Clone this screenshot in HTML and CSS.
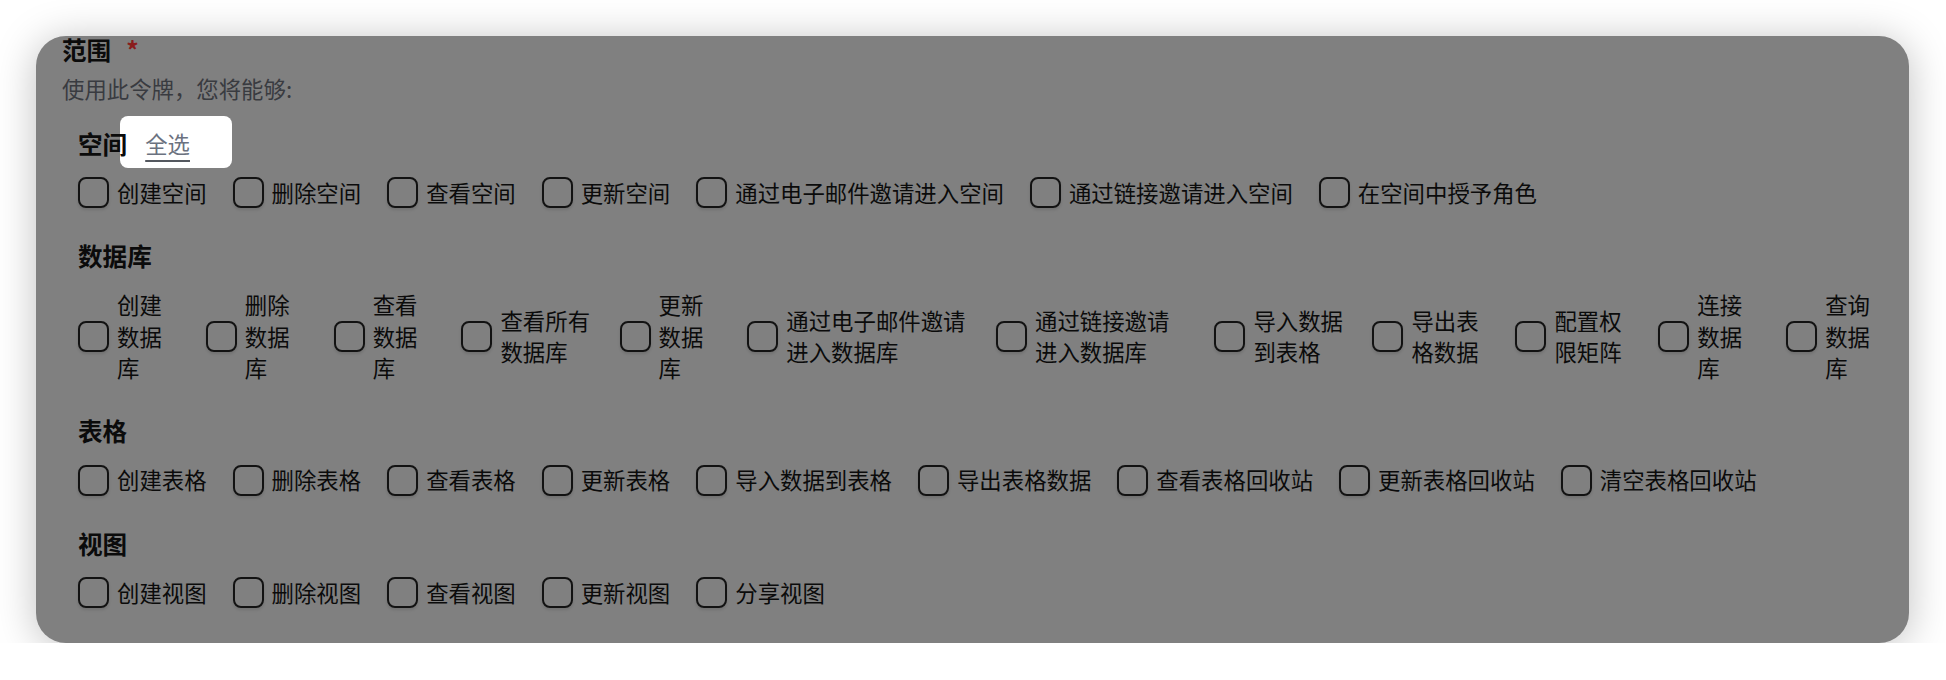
FILE: index.html
```html
<!DOCTYPE html>
<html lang="zh-CN">
<head>
    <meta charset="UTF-8">
    <meta name="viewport" content="width=device-width, initial-scale=1.0">
    <title>范围</title>
    <link rel="stylesheet" href="styles.css">
</head>
<body>
    <div class="page">
        <div class="card">
            <div class="field-title">范围<span class="req">*</span></div>
            <p class="hint">使用此令牌，您将能够:</p>

            <div class="scopes">
                <section class="scope">
                    <div class="scope-head">
                        <h3>空间</h3>
                        <button class="select-all">全选</button>
                    </div>
                    <div class="options">
                        <label class="opt"><input type="checkbox"><span>创建空间</span></label>
                        <label class="opt"><input type="checkbox"><span>删除空间</span></label>
                        <label class="opt"><input type="checkbox"><span>查看空间</span></label>
                        <label class="opt"><input type="checkbox"><span>更新空间</span></label>
                        <label class="opt"><input type="checkbox"><span>通过电子邮件邀请进入空间</span></label>
                        <label class="opt"><input type="checkbox"><span>通过链接邀请进入空间</span></label>
                        <label class="opt"><input type="checkbox"><span>在空间中授予角色</span></label>
                    </div>
                </section>

                <section class="scope">
                    <div class="scope-head">
                        <h3>数据库</h3>
                    </div>
                    <div class="options">
                        <label class="opt"><input type="checkbox"><span>创建数据库</span></label>
                        <label class="opt"><input type="checkbox"><span>删除数据库</span></label>
                        <label class="opt"><input type="checkbox"><span>查看数据库</span></label>
                        <label class="opt"><input type="checkbox"><span>查看所有数据库</span></label>
                        <label class="opt"><input type="checkbox"><span>更新数据库</span></label>
                        <label class="opt"><input type="checkbox"><span>通过电子邮件邀请进入数据库</span></label>
                        <label class="opt"><input type="checkbox"><span>通过链接邀请进入数据库</span></label>
                        <label class="opt"><input type="checkbox"><span>导入数据到表格</span></label>
                        <label class="opt"><input type="checkbox"><span>导出表格数据</span></label>
                        <label class="opt"><input type="checkbox"><span>配置权限矩阵</span></label>
                        <label class="opt"><input type="checkbox"><span>连接数据库</span></label>
                        <label class="opt"><input type="checkbox"><span>查询数据库</span></label>
                    </div>
                </section>

                <section class="scope">
                    <div class="scope-head">
                        <h3>表格</h3>
                    </div>
                    <div class="options">
                        <label class="opt"><input type="checkbox"><span>创建表格</span></label>
                        <label class="opt"><input type="checkbox"><span>删除表格</span></label>
                        <label class="opt"><input type="checkbox"><span>查看表格</span></label>
                        <label class="opt"><input type="checkbox"><span>更新表格</span></label>
                        <label class="opt"><input type="checkbox"><span>导入数据到表格</span></label>
                        <label class="opt"><input type="checkbox"><span>导出表格数据</span></label>
                        <label class="opt"><input type="checkbox"><span>查看表格回收站</span></label>
                        <label class="opt"><input type="checkbox"><span>更新表格回收站</span></label>
                        <label class="opt"><input type="checkbox"><span>清空表格回收站</span></label>
                    </div>
                </section>

                <section class="scope">
                    <div class="scope-head">
                        <h3>视图</h3>
                    </div>
                    <div class="options">
                        <label class="opt"><input type="checkbox"><span>创建视图</span></label>
                        <label class="opt"><input type="checkbox"><span>删除视图</span></label>
                        <label class="opt"><input type="checkbox"><span>查看视图</span></label>
                        <label class="opt"><input type="checkbox"><span>更新视图</span></label>
                        <label class="opt"><input type="checkbox"><span>分享视图</span></label>
                    </div>
                </section>
            </div>
        </div>
    </div>
</body>
</html>
```

FILE: styles.css
```css
body {
    margin: 0;
    padding: 0;
    background-color: #fff;
    font-family: "Noto Sans CJK SC", sans-serif;
}
.page {
    padding: 36px 37px 0 36px;
}
.card {
    background-color: #808080;
    color: #0b0b0b;
    border-radius: 30px;
    box-shadow: 0 4px 40px rgba(0,0,0,0.25);
    padding: 0 21px 35px 26px;
}
.field-title {
    font-size: 24.6px;
    font-weight: 700;
    line-height: 27px;
}
.req {
    color: #8a1c1c;
    font-weight: 700;
    margin-left: 15px;
}
.hint {
    margin: 10px 0 0;
    font-size: 22.4px;
    line-height: 31px;
    color: #393b40;
}
.scopes {
    margin: 24px 0 0 16px;
    display: flex;
    flex-direction: column;
    gap: 32px;
}
.scope-head {
    display: flex;
    align-items: center;
    margin-bottom: 19px;
}
.scope-head h3 {
    margin: 0;
    font-size: 24.6px;
    font-weight: 700;
    line-height: 30px;
    position: relative;
    z-index: 1;
}
.select-all {
    font-family: inherit;
    font-size: 22.4px;
    line-height: 31px;
    color: #6b7280;
    background-color: #fff;
    border: none;
    border-radius: 8px;
    padding: 12px 42px 9px 25px;
    margin: -12px 0 -10px -7px;
    text-decoration: underline;
    text-decoration-thickness: 2px;
    text-underline-offset: 7px;
    text-decoration-color: #54585f;
    cursor: pointer;
}
.options {
    display: flex;
    align-items: center;
    gap: 26px;
}
.opt {
    display: flex;
    align-items: center;
    font-size: 22.4px;
    line-height: 1.4;
    cursor: pointer;
}
.opt input {
    -webkit-appearance: none;
    appearance: none;
    flex-shrink: 0;
    width: 31px;
    height: 31px;
    margin: 0 8px 0 0;
    border: 2px solid #121212;
    border-radius: 8px;
    background: transparent;
    box-shadow: 0 2px 3px rgba(0,0,0,0.12);
}
```
